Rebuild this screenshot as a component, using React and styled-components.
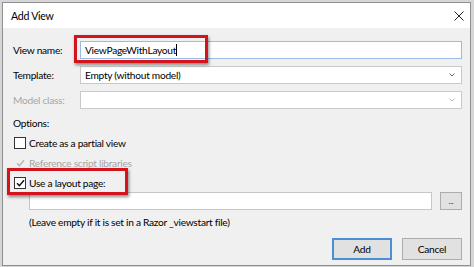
import React from "react";
import styled, { createGlobalStyle } from "styled-components";

const Global = createGlobalStyle`
  html, body { margin: 0; padding: 0; }
  body {
    width: 474px; height: 267px; overflow: hidden;
    background: #d6d6d6;
    font-family: Lato, "Noto Sans", sans-serif;
    font-size: 10.2px;
    letter-spacing: -0.28px;
    color: #000;
  }
`;

const Screen = styled.div`
  width: 474px;
  height: 267px;
  padding: 2px 3px 1px 2px;
  box-sizing: border-box;
  display: flex;
`;

const Window = styled.div`
  flex: 1;
  display: flex;
  flex-direction: column;
  border: 1px solid #8f8f8f;
  background: #f0f0f0;
`;

const TitleBar = styled.div`
  height: 25px;
  background: #fff;
  display: flex;
  align-items: center;
  justify-content: space-between;
  padding: 0 6px 0 8px;
  font-size: 10.6px;
`;

const CloseIcon = styled.svg`
  width: 10px;
  height: 10px;
`;

const Body = styled.div`
  flex: 1;
  display: flex;
  flex-direction: column;
  padding: 13px 8px 0 10px;
`;

const FieldRow = styled.div`
  display: flex;
  align-items: center;
  height: 18px;
  margin-bottom: ${(p) => p.$mb ?? 7}px;
`;

const Label = styled.div`
  width: 67px;
  color: ${(p) => (p.$disabled ? "#a6a6a6" : "#000")};
`;

const Highlight = styled.div`
  position: relative;
  flex: 1;
  display: flex;
  &::after {
    content: "";
    position: absolute;
    left: ${(p) => p.$l}px;
    top: ${(p) => p.$t}px;
    width: ${(p) => p.$w}px;
    height: ${(p) => p.$h}px;
    border: 3px solid #d3141c;
    box-sizing: border-box;
    box-shadow: 1px 2px 3px rgba(0, 0, 0, 0.45);
    pointer-events: none;
  }
`;

const TextBox = styled.div`
  flex: 1;
  height: 18px;
  box-sizing: border-box;
  background: #fff;
  border: 1px solid ${(p) => (p.$focus ? "#99bde6" : "#c6c6c6")};
  display: flex;
  align-items: center;
  padding: 0 4px;
  white-space: nowrap;
`;

const Caret = styled.span`
  display: inline-block;
  width: 1px;
  height: 12px;
  background: #000;
`;

const Select = styled.div`
  flex: 1;
  height: 18px;
  box-sizing: border-box;
  background: #fff;
  border: 1px solid #c9c9c9;
  display: flex;
  align-items: center;
  justify-content: space-between;
  padding: 0 4px 0 4px;
`;

const Chevron = styled.svg`
  width: 6px;
  height: 4px;
  margin-right: 2px;
`;

const SectionLabel = styled.div`
  height: 16px;
  line-height: 16px;
  margin-bottom: 4px;
`;

const CheckRow = styled.div`
  display: flex;
  align-items: center;
  height: 16px;
  margin-bottom: ${(p) => p.$mb ?? 4}px;
  padding-left: 1px;
  color: ${(p) => (p.$disabled ? "#a6a6a6" : "#000")};
  position: relative;
  ${(p) =>
    p.$highlight &&
    `
    &::after {
      content: "";
      position: absolute;
      left: -6px;
      top: -7px;
      width: 121px;
      height: 27px;
      border: 3px solid #d3141c;
      box-sizing: border-box;
      box-shadow: 1px 2px 3px rgba(0, 0, 0, 0.45);
    }
  `}
`;

const Box = styled.div`
  width: 12px;
  height: 12px;
  box-sizing: border-box;
  border: 1px solid ${(p) => (p.$disabled ? "transparent" : "#333")};
  background: ${(p) => (p.$disabled ? "transparent" : "#fff")};
  margin-right: 3px;
  display: flex;
  align-items: center;
  justify-content: center;
`;

const CheckSvg = styled.svg`
  width: 9px;
  height: 8px;
`;

const PathRow = styled.div`
  display: flex;
  align-items: center;
  height: 18px;
  padding-left: 16px;
  gap: 8px;
  margin-bottom: 4px;
  margin-top: 1px;
`;

const Ellipsis = styled.div`
  width: 22px;
  height: 18px;
  box-sizing: border-box;
  border: 1px solid #adadad;
  background: #e1e1e1;
  display: flex;
  align-items: flex-end;
  justify-content: center;
  padding-bottom: 4px;
  font-size: 8px;
  line-height: 8px;
  color: #333;
`;

const Hint = styled.div`
  height: 16px;
  line-height: 16px;
  padding-left: 16px;
`;

const Buttons = styled.div`
  margin-top: auto;
  display: flex;
  justify-content: flex-end;
  gap: 10px;
  padding-bottom: 5px;
`;

const Button = styled.div`
  width: 60px;
  height: 22px;
  box-sizing: border-box;
  border: ${(p) => (p.$default ? "2px solid #4a90d9" : "1px solid #adadad")};
  background: #e1e1e1;
  display: flex;
  align-items: center;
  justify-content: center;
`;

const Check = ({ color }) => (
  <CheckSvg viewBox="0 0 9 8">
    <path d="M1 4.2 L3.4 6.6 L8 1.2" fill="none" stroke={color} strokeWidth="1.4" />
  </CheckSvg>
);

export default function App() {
  return (
    <>
      <Global />
      <Screen>
        <Window>
          <TitleBar>
            <span>Add View</span>
            <CloseIcon viewBox="0 0 10 10">
              <path d="M0.5 0.5 L9.5 9.5 M9.5 0.5 L0.5 9.5" stroke="#222" strokeWidth="1" />
            </CloseIcon>
          </TitleBar>
          <Body>
            <FieldRow>
              <Label>View name:</Label>
              <Highlight $l={-6} $t={-6} $w={134} $h={28}>
                <TextBox $focus>
                  ViewPageWithLayout
                  <Caret />
                </TextBox>
              </Highlight>
            </FieldRow>
            <FieldRow>
              <Label>Template:</Label>
              <Select>
                <span>Empty (without model)</span>
                <Chevron viewBox="0 0 6 4">
                  <path d="M0.5 0.5 L3 3 L5.5 0.5" fill="none" stroke="#666" strokeWidth="1" />
                </Chevron>
              </Select>
            </FieldRow>
            <FieldRow $mb={6}>
              <Label $disabled>Model class:</Label>
              <Select>
                <span />
                <Chevron viewBox="0 0 6 4">
                  <path d="M0.5 0.5 L3 3 L5.5 0.5" fill="none" stroke="#bbb" strokeWidth="1" />
                </Chevron>
              </Select>
            </FieldRow>
            <SectionLabel>Options:</SectionLabel>
            <CheckRow>
              <Box />
              Create as a partial view
            </CheckRow>
            <CheckRow $disabled>
              <Box $disabled>
                <Check color="#b5b5b5" />
              </Box>
              Reference script libraries
            </CheckRow>
            <CheckRow $highlight $mb={0}>
              <Box>
                <Check color="#111" />
              </Box>
              Use a layout page:
            </CheckRow>
            <PathRow>
              <TextBox />
              <Ellipsis>...</Ellipsis>
            </PathRow>
            <Hint>(Leave empty if it is set in a Razor _viewstart file)</Hint>
            <Buttons>
              <Button $default>Add</Button>
              <Button>Cancel</Button>
            </Buttons>
          </Body>
        </Window>
      </Screen>
    </>
  );
}
